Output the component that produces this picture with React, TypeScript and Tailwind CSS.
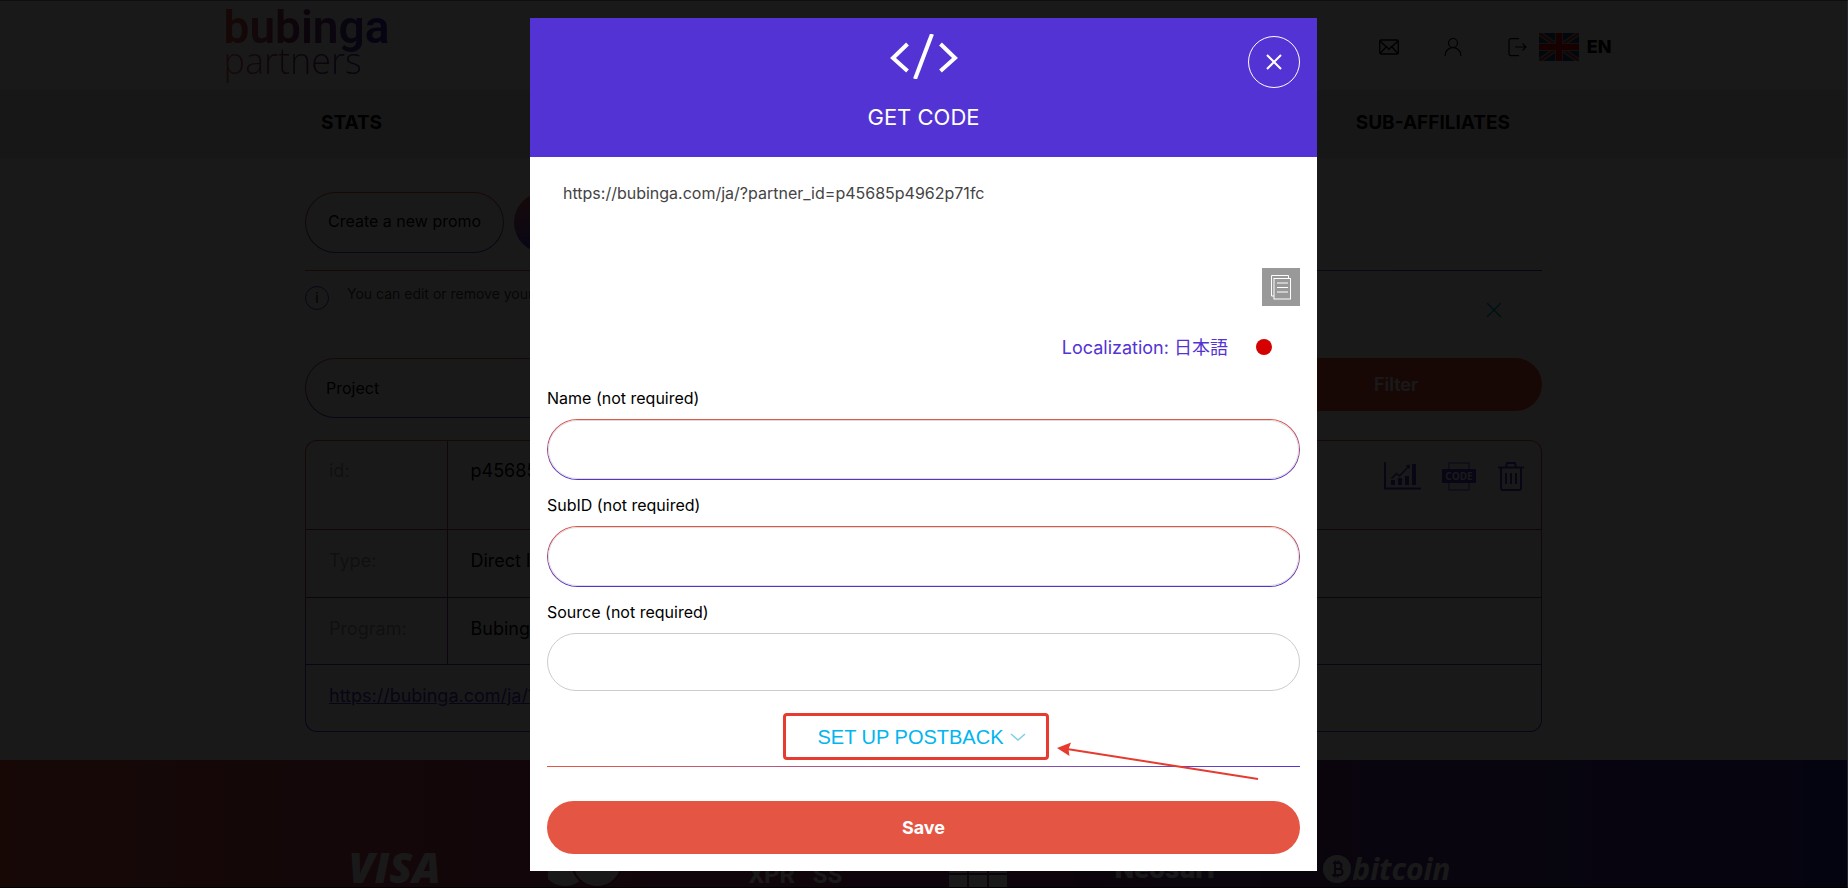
import { useState } from "react";

const PARTNER_URL = "https://bubinga.com/ja/?partner_id=p45685p4962p71fc";

const gradientBorder =
  "border border-transparent [background:linear-gradient(#fff,#fff)_padding-box,linear-gradient(#e45543,#5433d4)_border-box]";

const promoRows = [
  {
    label: "Type:",
    value: "Direct link",
    line: "border-[#9a4270]",
    size: "h-[68px]",
  },
  {
    label: "Program:",
    value: "Bubinga",
    line: "border-[#7a3a90]",
    size: "h-[67px]",
  },
];

function Logo() {
  return (
    <a
      href="#"
      className="flex flex-col bg-linear-to-r from-[#e45543] via-[#7a2f70] to-[#3a22c4] bg-clip-text pt-1.5 pb-3 text-transparent"
    >
      <span className="font-[Roboto] text-[46px] leading-10 font-semibold">
        bubinga
      </span>
      <span className="font-['Open_Sans'] text-4xl leading-7 font-light">
        partners
      </span>
    </a>
  );
}

function FlagIcon() {
  return (
    <svg className="h-7 w-10" viewBox="0 0 40 28">
      <rect width="40" height="28" rx="2" fill="#0a4a80" />
      <path d="M0 0l40 28M40 0L0 28" stroke="#aaa" strokeWidth="5" />
      <path d="M0 0l40 28M40 0L0 28" stroke="#d22" strokeWidth="2" />
      <path d="M20 0v28M0 14h40" stroke="#aaa" strokeWidth="8" />
      <path d="M20 0v28M0 14h40" stroke="#d00" strokeWidth="6" />
    </svg>
  );
}

function Header() {
  return (
    <header>
      <div className="mx-auto flex h-[89px] max-w-[1400px] items-start justify-between pr-3">
        <Logo />
        <div className="flex items-center pt-8">
          <button aria-label="Messages" className="mr-11">
            <svg
              className="h-5 w-5"
              viewBox="0 0 20 20"
              fill="none"
              stroke="#000"
              strokeWidth="1.4"
            >
              <rect x="0.7" y="3" width="18.6" height="14" rx="1.5" />
              <path d="M1 4l7 6.500M19 4l-7 6.500M1 16.500l6.500-7L10 12.500l2.500-3 6.500 7" />
            </svg>
          </button>
          <button aria-label="Profile" className="mr-11">
            <svg
              className="h-5 w-5"
              viewBox="0 0 20 20"
              fill="none"
              stroke="#000"
              strokeWidth="1.2"
            >
              <circle cx="10" cy="6" r="4.500" />
              <path d="M2 19c0-5 3.500-8.300 8-8.300s8 3.300 8 8.300" />
            </svg>
          </button>
          <button aria-label="Log out" className="mr-3">
            <svg
              className="h-5 w-5"
              viewBox="0 0 20 20"
              fill="none"
              stroke="#000"
              strokeWidth="1.2"
            >
              <path d="M12 1.600H4a2 2 0 0 0-2 2v13a2 2 0 0 0 2 2h8" />
              <path d="M8 10h11M15.500 6.500L19 10l-3.500 3.500" />
            </svg>
          </button>
          <button className="flex items-center gap-2 text-lg leading-6 font-extrabold">
            <FlagIcon />
            EN
          </button>
        </div>
      </div>
      <nav className="bg-[#e8e8e8]">
        <div className="mx-auto flex h-[68px] max-w-[1237px] items-center justify-between pr-8 pb-0.5 pl-4 text-[19px] font-bold">
          <a href="#">STATS</a>
          <a href="#">SUB-AFFILIATES</a>
        </div>
      </nav>
    </header>
  );
}

function PromoActions() {
  return (
    <div className="flex justify-end gap-5 pr-4 text-[#5433d4]">
      <button aria-label="Statistics">
        <svg className="h-[30px] w-[38px]" viewBox="0 0 38 30">
          <path d="M2 1v26.500h36" fill="none" stroke="currentColor" strokeWidth="2" />
          <path
            d="M8 19h4v5H8zM15 17h4v7h-4zM22 15h4v9h-4zM29 3h4v21h-4z"
            fill="currentColor"
          />
          <path
            d="M8.500 17.500l5-5 3 2.500 9-9.500"
            fill="none"
            stroke="currentColor"
            strokeWidth="1.5"
          />
          <path d="M22.500 4.500l4.500-1-.5 5z" fill="currentColor" />
        </svg>
      </button>
      <button aria-label="Get code">
        <svg className="h-[30px] w-9" viewBox="0 0 36 30">
          <rect
            x="8"
            y="2"
            width="20"
            height="27"
            fill="none"
            stroke="currentColor"
          />
          <rect x="1" y="8" width="34" height="14" fill="currentColor" />
          <text
            x="18"
            y="19"
            fill="#fff"
            textAnchor="middle"
            fontSize="10"
            fontWeight="700"
            fontFamily="Open Sans, sans-serif"
          >
            CODE
          </text>
        </svg>
      </button>
      <button aria-label="Remove">
        <svg
          className="h-[30px] w-7"
          viewBox="0 0 28 30"
          fill="none"
          stroke="currentColor"
          strokeWidth="2"
        >
          <path d="M1 6.500h26M9 6l1-4h8l1 4" />
          <path d="M4 7v20a2 2 0 0 0 2 2h16a2 2 0 0 0 2-2V7" />
          <path d="M9 12v11M14 12v11M19 12v11" />
        </svg>
      </button>
    </div>
  );
}

function PromoCard() {
  return (
    <div
      className={`mt-[22px] overflow-hidden rounded-xl text-lg leading-6 ${gradientBorder}`}
    >
      <table className="w-full border-collapse">
        <tbody>
          <tr className="h-[88px] align-top">
            <td className="w-[141px] border-r border-[#b84a50] pt-[18px] pl-[23px] text-[#a5a5a5]">
              id:
            </td>
            <td className="pt-[18px] pl-[23px]">p45685p4962p71fc</td>
            <td className="pt-5">
              <PromoActions />
            </td>
          </tr>
          {promoRows.map((row) => (
            <tr key={row.label} className={row.size}>
              <td
                className={`border-t border-r pb-1 pl-[23px] text-[#a5a5a5] ${row.line}`}
              >
                {row.label}
              </td>
              <td colSpan={2} className={`border-t pb-1 pl-[23px] ${row.line}`}>
                {row.value}
              </td>
            </tr>
          ))}
          <tr className="h-[67px]">
            <td colSpan={3} className="border-t border-[#5a38c0] pb-1 pl-[23px]">
              <a href={PARTNER_URL} className="text-[#5433d4] underline">
                {PARTNER_URL}
              </a>
            </td>
          </tr>
        </tbody>
      </table>
    </div>
  );
}

function PaymentFooter() {
  return (
    <footer className="flex-1 overflow-hidden bg-linear-to-r from-[#e45543] via-[#8f2c74] to-[#2c2aa0] text-white">
      <div className="mx-auto flex max-w-[1150px] items-start justify-between pt-[87px] pr-12">
        <span className="font-['Open_Sans'] text-[42px] leading-10 font-extrabold italic">
          VISA
        </span>
        <svg className="h-12 w-[94px]" viewBox="0 0 94 48">
          <circle cx="17" cy="15" r="24" fill="currentColor" />
          <circle
            cx="49"
            cy="15"
            r="25"
            fill="currentColor"
            stroke="#a03058"
            strokeWidth="2"
          />
        </svg>
        <span className="pt-3.5 font-[Roboto] text-2xl leading-7 font-bold">
          XPR&nbsp;&nbsp;&nbsp;SS
        </span>
        <svg className="h-12 w-[58px]" viewBox="0 0 58 48">
          <path
            d="M0 0h18v48H0zM20 0h18v48H20zM40 0h18v48H40z"
            fill="currentColor"
          />
          <path d="M0 27h58" stroke="#7a2c80" strokeWidth="2" />
        </svg>
        <span className="pt-1 font-[Roboto] text-[28px] leading-9 font-black">
          Neosurf
        </span>
        <span className="flex items-center gap-px pt-1 font-['Open_Sans'] text-[30px] leading-9 font-bold italic">
          <svg className="h-7 w-7" viewBox="0 0 28 28">
            <circle cx="14" cy="14" r="14" fill="currentColor" />
            <path
              d="M10 8h5.500a3 3 0 0 1 0 6H11h5.500a3 3 0 0 1 0 6H9M12 8v12M12.500 5.500V8M15.500 5.500V8M11.500 20v2.500M14.500 20v2.500"
              fill="none"
              stroke="#6a2c80"
              strokeWidth="2"
            />
          </svg>
          bitcoin
        </span>
      </div>
    </footer>
  );
}

interface FieldProps {
  id: string;
  label: string;
  plain?: boolean;
}

function Field({ id, label, plain }: FieldProps) {
  const [value, setValue] = useState("");

  return (
    <div className="flex flex-col gap-[9px]">
      <label htmlFor={id} className="text-base leading-6 text-black">
        {label}
      </label>
      <input
        id={id}
        type="text"
        value={value}
        onChange={(e) => setValue(e.target.value)}
        className={
          plain
            ? "h-[58px] rounded-full border border-[#ccc] px-6"
            : `h-[61px] rounded-full px-6 shadow-[inset_0_0_0_1px_#ddd] ${gradientBorder}`
        }
      />
    </div>
  );
}

function GetCodeModal() {
  return (
    <div
      role="dialog"
      aria-labelledby="modal-title"
      className="w-full max-w-[787px] bg-white"
    >
      <div className="relative flex flex-col items-center gap-6 bg-[#5433d4] pt-4 pb-[26px] text-white">
        <svg
          className="h-[45px] w-[68px]"
          viewBox="0 0 68 45"
          fill="none"
          stroke="currentColor"
          strokeWidth="4"
        >
          <path d="M17.500 10L3 24l14.500 13M50.500 10L65 24 50.500 37" />
          <path d="M42 0L25 45" />
        </svg>
        <h2 id="modal-title" className="text-[22px] leading-7">
          GET CODE
        </h2>
        <button
          aria-label="Close"
          className="absolute top-[18px] right-[17px] flex h-[52px] w-[52px] items-center justify-center rounded-full border border-white"
        >
          <svg
            className="h-4 w-4"
            viewBox="0 0 16 16"
            stroke="currentColor"
            strokeWidth="2"
          >
            <path d="M1 1l14 14M15 1L1 15" />
          </svg>
        </button>
      </div>

      <div className="flex flex-col px-[17px] pt-4 pb-[17px]">
        <textarea
          readOnly
          aria-label="Code"
          value={PARTNER_URL}
          className="h-[95px] resize-none px-4 py-2 text-base leading-6 text-[#444] outline-none"
        />
        <button
          aria-label="Copy"
          className="flex h-[38px] w-[38px] items-center justify-center self-end bg-[#999] text-white"
        >
          <svg
            className="h-[26px] w-5"
            viewBox="0 0 20 26"
            fill="none"
            stroke="currentColor"
          >
            <path d="M3 22H.5V1.500H17.500V4" />
            <rect x="3" y="4.500" width="16.500" height="20.500" />
            <path d="M6 9h11M6 13.500h11M6 18h11" />
          </svg>
        </button>

        <div className="mt-[26px] flex items-center justify-end gap-7 pr-7">
          <span className="text-lg leading-7 text-[#5433d4]">
            Localization:{" "}
            <span className="font-['Noto_Sans_CJK_JP',sans-serif]">日本語</span>
          </span>
          <span className="h-4 w-4 rounded-full bg-[#d50000]" />
        </div>

        <div className="mt-6 flex flex-col gap-[13px]">
          <Field id="name" label="Name (not required)" />
          <Field id="subid" label="SubID (not required)" />
          <Field id="source" label="Source (not required)" plain />
        </div>

        <div className="mt-[22px] flex justify-center pr-4">
          <div className="relative">
            <button className="flex h-[47px] items-center gap-1.5 rounded-sm border-3 border-[#e63b2e] pr-5 pl-8 font-['Liberation_Sans',sans-serif] text-xl text-[#00b5f0]">
              SET UP POSTBACK
              <svg
                className="h-2 w-4"
                viewBox="0 0 16 8"
                fill="none"
                stroke="#7fcfe6"
                strokeWidth="1.5"
              >
                <path d="M1 1l7 6 7-6" />
              </svg>
            </button>
            <svg
              className="absolute top-7 left-full ml-2 h-10 w-[202px]"
              viewBox="0 0 202 40"
            >
              <path d="M10 8L201 38" stroke="#e63b2e" strokeWidth="2" />
              <path d="M0 7L14 1.500 11.500 8.200 12.500 15z" fill="#e63b2e" />
            </svg>
          </div>
        </div>
        <div className="mt-[6px] h-px bg-linear-to-r from-[#e45543] to-[#5433d4]" />
        <button className="mt-[34px] h-[53px] rounded-full bg-[#e45543] text-lg font-bold text-white">
          Save
        </button>
      </div>
    </div>
  );
}

export default function App() {
  return (
    <div className="relative flex h-screen flex-col overflow-hidden border-t border-r border-b border-t-[#0e0e0e] border-r-[#26262c] border-b-black bg-white font-[Inter,sans-serif] text-black">
      <Header />

      <main className="mx-auto w-full max-w-[1237px] pt-[34px] pb-7">
        <div className="flex gap-[10px]">
          <button
            className={`h-[61px] rounded-full px-[22px] pb-1 ${gradientBorder}`}
          >
            Create a new promo
          </button>
          <button
            aria-label="Promo list"
            className="w-48 rounded-full bg-linear-to-b from-[#e45543] to-[#5433d4]"
          />
        </div>

        <div className="mt-[17px] h-px bg-linear-to-r from-[#e45543] to-[#5433d4]" />
        <div className="mt-[15px] flex h-[72px] items-start justify-between pr-10">
          <div className="flex gap-[18px]">
            <span className="flex h-6 w-6 items-center justify-center rounded-full border border-[#5433d4] text-sm">
              i
            </span>
            <span className="text-sm leading-4 text-[#444]">
              You can edit or remove your promo
            </span>
          </div>
          <button aria-label="Dismiss" className="pt-4">
            <svg
              className="h-4 w-4"
              viewBox="0 0 16 16"
              stroke="#00a8c8"
              strokeWidth="1.5"
            >
              <path d="M1 1l14 14M15 1L1 15" />
            </svg>
          </button>
        </div>

        <div className="flex gap-6">
          <select
            aria-label="Project"
            className={`h-[60px] w-72 appearance-none rounded-full px-5 ${gradientBorder}`}
          >
            <option>Project</option>
          </select>
          <button className="ml-auto h-[53px] w-[292px] rounded-full bg-[#e45543] text-lg font-semibold text-white">
            Filter
          </button>
        </div>

        <PromoCard />
      </main>

      <PaymentFooter />

      <div className="absolute inset-0 flex items-start justify-center bg-black/90 pt-[17px]">
        <GetCodeModal />
      </div>
    </div>
  );
}
